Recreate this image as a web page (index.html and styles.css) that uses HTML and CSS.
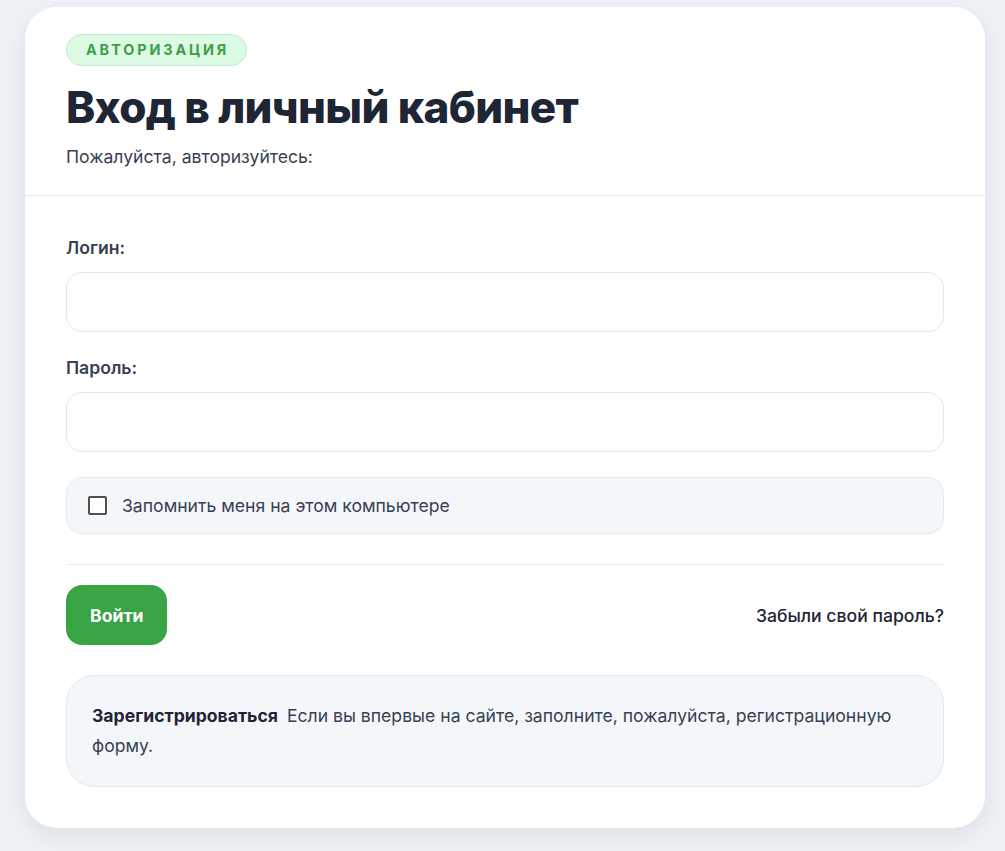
FILE: index.html
```html
<html>
<head>
<link rel="stylesheet" href="styles.css">
<meta charset="UTF-8">
<title>Вход в личный кабинет</title>
</head>
<body>
  <div class="page">
    <div class="card">
      <div class="cardHead">
        <span class="badge">Авторизация</span>
        <h1>Вход в личный кабинет</h1>
        <p class="lead">Пожалуйста, авторизуйтесь:</p>
      </div>

      <form class="cardBody">
        <label class="field">
          <span class="fieldLabel">Логин:</span>
          <input type="text" class="input">
        </label>
        <label class="field">
          <span class="fieldLabel">Пароль:</span>
          <input type="password" class="input">
        </label>

        <label class="remember">
          <span class="box"></span>
          <span>Запомнить меня на этом компьютере</span>
        </label>

        <div class="actions">
          <button type="button" class="btn">Войти</button>
          <a class="forgot" href="#">Забыли свой пароль?</a>
        </div>

        <div class="register">
          <b>Зарегистрироваться</b> Если вы впервые на сайте, заполните, пожалуйста, регистрационную форму.
        </div>
      </form>
    </div>
  </div>
</body>
</html>
```

FILE: styles.css
```css
* {
  box-sizing: border-box;
}

body {
  margin: 0;
  background: #eef1f5;
  font-family: Inter, "Noto Sans", sans-serif;
  font-size: 17.6px;
  color: #1e2535;
}

.page {
  padding: 7px 20px 0 25px;
}

.card {
  background: #ffffff;
  border-radius: 32px;
  box-shadow: 0 8px 24px rgba(30, 41, 59, 0.08);
  height: 821px;
}

/* header with badge and title */
.cardHead {
  padding: 27px 41px 26px;
  border-bottom: 1px solid #e7ebf0;
}
.badge {
  display: inline-block;
  height: 32px;
  line-height: 30px;
  padding: 0 17px 0 19px;
  border: 1px solid #bdeec8;
  border-radius: 16px;
  background: #ddfbe4;
  color: #3aa047;
  font-size: 14.4px;
  font-weight: 700;
  letter-spacing: 0.2em;
  text-transform: uppercase;
}
h1 {
  margin: 14px 0 0;
  font-size: 44px;
  line-height: 54px;
  font-weight: 800;
  letter-spacing: -0.015em;
  color: #1e2535;
}
.lead {
  margin: 11px 0 0;
  font-size: 17.6px;
  line-height: 24px;
  color: #374151;
}

/* form */
.cardBody {
  margin: 0;
  padding: 40px 41px 41px;
}
.field {
  display: block;
  margin-bottom: 24px;
}
.fieldLabel {
  display: block;
  line-height: 24px;
  font-weight: 600;
  color: #374151;
  margin-bottom: 12px;
}
.input {
  display: block;
  width: 100%;
  height: 60px;
  border: 1px solid #e3e7ee;
  border-radius: 16px;
  background: #ffffff;
  font: inherit;
  padding: 0 18px;
  outline: none;
}
.field:nth-of-type(2) {
  margin-bottom: 25px;
}

.remember {
  display: flex;
  align-items: center;
  gap: 15px;
  height: 57px;
  padding: 0 21px;
  border: 1px solid #e5e9ef;
  border-radius: 16px;
  background: #f4f7fa;
  color: #374151;
}
.box {
  width: 19px;
  height: 19px;
  border: 2px solid #505050;
  border-radius: 2px;
  background: #ffffff;
}

.actions {
  display: flex;
  align-items: center;
  justify-content: space-between;
  margin-top: 30px;
  padding-top: 20px;
  border-top: 1px solid #e7ebf0;
}
.btn {
  height: 60px;
  padding: 0 24px;
  border: none;
  border-radius: 16px;
  background: #38a444;
  color: #ffffff;
  font: inherit;
  font-weight: 700;
}
.forgot {
  color: #1e2535;
  text-decoration: none;
  font-weight: 500;
}

.register {
  margin-top: 30px;
  padding: 25px 26px 25px 25px;
  border: 1px solid #e3e7ee;
  border-radius: 28px;
  background: #f4f7fa;
  line-height: 30px;
  color: #374151;
}
.register b {
  margin-right: 4px;
  color: #1e2535;
  font-weight: 650;
}
```
